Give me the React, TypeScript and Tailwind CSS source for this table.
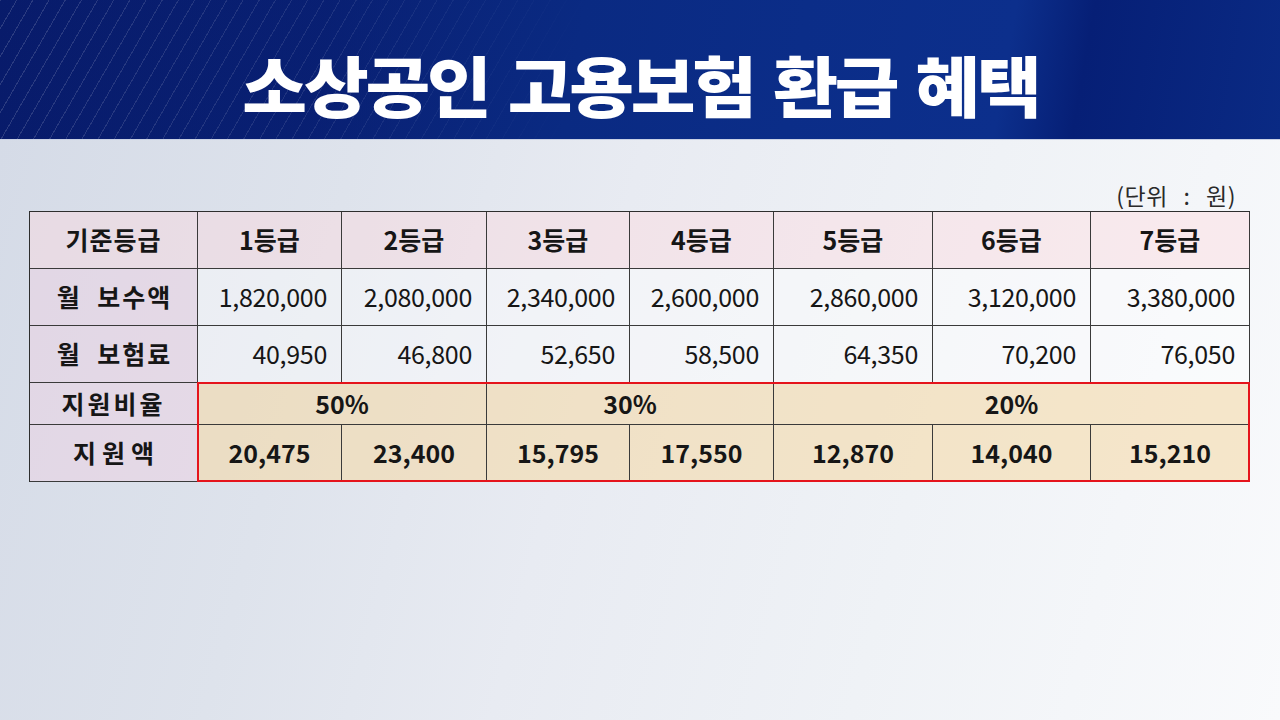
import React from "react";

const F = "font-['Noto_Sans_CJK_KR','Noto_Sans',sans-serif]";

const grades = ["1등급", "2등급", "3등급", "4등급", "5등급", "6등급", "7등급"];
const pay = ["1,820,000", "2,080,000", "2,340,000", "2,600,000", "2,860,000", "3,120,000", "3,380,000"];
const prem = ["40,950", "46,800", "52,650", "58,500", "64,350", "70,200", "76,050"];

const cellBase = "border-r border-b border-[#3a3a3a] flex items-center text-[#161616]";
const headBg = "bg-[rgba(255,218,222,0.42)]";
const firstBg = "bg-[rgba(240,208,226,0.45)]";
const dataBg = "bg-[rgba(255,255,255,0.45)]";
const beigeBg = "bg-[rgba(245,218,170,0.6)]";

export default function App() {
  return (
    <div className={`w-[1280px] h-[720px] flex flex-col overflow-hidden ${F}`}>
      <header className="h-[140px] shrink-0 flex justify-center pt-[50px] bg-[linear-gradient(100deg,rgba(8,28,110,0.1)_0%,rgba(9,32,118,0.45)_25%,#0a2a82_45%,#0b2d88_62%,#0c2f8c_78%,#061f76_84%,#0a2a84_100%),repeating-linear-gradient(120deg,rgba(255,255,255,0.16)_0px,rgba(255,255,255,0.16)_1px,transparent_1px,transparent_14px),linear-gradient(90deg,#081b6a,#0a2a80)] border-b border-[#c9d1e4]">
        <h1 className="text-white text-[66px] leading-[66px] font-black tracking-[-3px] [word-spacing:6px] scale-x-[1.066]">
          소상공인 고용보험 환급 혜택
        </h1>
      </header>

      <main className="flex-1 flex flex-col pl-[29px] pr-[30px] bg-[linear-gradient(105deg,#d5dbe7_0%,#dee3ec_25%,#e8ebf2_45%,#eff2f6_70%,#f9fafc_100%)]">
        <div className="mt-[41px] h-[28px] leading-[28px] text-right pr-[14px] text-[23px] tracking-[0.5px] [word-spacing:10px] text-[#2a2a2a]">
          (단위 : 원)
        </div>
        <div className="mt-[2px] grid grid-cols-[168px_144px_145px_143px_144px_159px_158px_159px] grid-rows-[57px_57px_57px_42px_57px] border-l border-t border-[#2e2e2e]">
          {/* header row */}
          <div className={`${cellBase} ${headBg} justify-center text-[25px] font-bold tracking-[1px]`}>기준등급</div>
          {grades.map((g) => (
            <div key={g} className={`${cellBase} ${headBg} justify-center text-[25px] font-bold`}>
              {g}
            </div>
          ))}

          {/* 월 보수액 */}
          <div className={`${cellBase} ${firstBg} justify-center pl-[2px] text-[25px] font-bold [word-spacing:8px] tracking-[2px]`}>월 보수액</div>
          {pay.map((v) => (
            <div key={v} className={`${cellBase} ${dataBg} justify-end pr-[14px] text-[25px] tracking-[-0.3px]`}>
              {v}
            </div>
          ))}

          {/* 월 보험료 */}
          <div className={`${cellBase} ${firstBg} justify-center pl-[2px] text-[25px] font-bold [word-spacing:8px] tracking-[2px]`}>월 보험료</div>
          {prem.map((v) => (
            <div key={v} className={`${cellBase} ${dataBg} justify-end pr-[14px] text-[25px] tracking-[-0.3px]`}>
              {v}
            </div>
          ))}

          {/* 지원비율 */}
          <div className={`${cellBase} ${firstBg} row-start-4 col-start-1 justify-center text-[25px] font-bold tracking-[3px]`}>지원비율</div>
          <div className={`${cellBase} ${beigeBg} row-start-4 col-start-2 col-span-2 justify-center text-[25px] font-bold`}>50%</div>
          <div className={`${cellBase} ${beigeBg} row-start-4 col-start-4 col-span-2 justify-center text-[25px] font-bold`}>30%</div>
          <div className={`${cellBase} ${beigeBg} row-start-4 col-start-6 col-span-3 justify-center text-[25px] font-bold`}>20%</div>

          {/* 지원액 */}
          <div className={`${cellBase} ${firstBg} row-start-5 col-start-1 justify-center text-[25px] font-bold tracking-[6px] pl-[6px]`}>지원액</div>
          <div className={`${cellBase} ${beigeBg} row-start-5 col-start-2 justify-center text-[25px] font-bold`}>20,475</div>
          <div className={`${cellBase} ${beigeBg} row-start-5 col-start-3 justify-center text-[25px] font-bold`}>23,400</div>
          <div className={`${cellBase} ${beigeBg} row-start-5 col-start-4 justify-center text-[25px] font-bold`}>15,795</div>
          <div className={`${cellBase} ${beigeBg} row-start-5 col-start-5 justify-center text-[25px] font-bold`}>17,550</div>
          <div className={`${cellBase} ${beigeBg} row-start-5 col-start-6 justify-center text-[25px] font-bold`}>12,870</div>
          <div className={`${cellBase} ${beigeBg} row-start-5 col-start-7 justify-center text-[25px] font-bold`}>14,040</div>
          <div className={`${cellBase} ${beigeBg} row-start-5 col-start-8 justify-center text-[25px] font-bold`}>15,210</div>

          {/* red highlight frame */}
          <div className="row-start-4 row-span-2 col-start-2 col-span-7 -ml-px -mt-px border-2 border-[#e5141c] pointer-events-none z-10" />
        </div>
      </main>
    </div>
  );
}
